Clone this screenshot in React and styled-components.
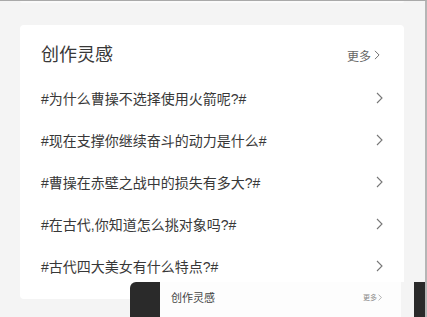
import styled, { createGlobalStyle } from "styled-components";

const GlobalStyle = createGlobalStyle`
  html, body {
    margin: 0;
    padding: 0;
    background: #f4f4f4;
  }
  * {
    box-sizing: border-box;
  }
`;

const Page = styled.div`
  position: relative;
  height: 317px;
  overflow: hidden;
  padding: 0 21px 0 20px;
  border-top: 1px solid #a9a9a9;
  border-right: 2px solid #b5b5b5;
  font-family: "Liberation Sans", "Noto Sans CJK SC", sans-serif;
`;

const PrevCard = styled.div`
  height: 2px;
  background: #fafafa;
  border-radius: 0 0 4px 4px;
`;

const Card = styled.section`
  margin-top: 22px;
  background: #ffffff;
  border-radius: 4px;
  padding: 18px 21px 12px 21px;
`;

const Header = styled.div`
  display: flex;
  align-items: center;
  justify-content: space-between;
  height: 24px;
  margin-bottom: 10px;
`;

const Title = styled.h2`
  margin: 0;
  font-size: 18px;
  font-weight: 400;
  color: #383838;
  line-height: 24px;
`;

const More = styled.a`
  display: flex;
  align-items: center;
  gap: ${p => p.$small ? "1px" : "3px"};
  margin-right: ${p => p.$small ? "0" : "3px"};
  font-size: ${p => p.$small ? "7px" : "12px"};
  color: ${p => p.$small ? "#8a8a8a" : "#666666"};
  cursor: pointer;
`;

const Row = styled.div`
  display: flex;
  align-items: center;
  justify-content: space-between;
  height: 42px;
  font-size: 14px;
  color: #383838;
`;

const Frame = styled.div`
  position: absolute;
  left: 130px;
  top: 281px;
  right: 0;
  bottom: 0;
  display: flex;
  padding: 0 11px 0 30px;
  background: #2a2a2a;
  border-radius: 6px 0 0 0;
`;

const Screen = styled.div`
  flex: 1;
  display: flex;
  background: #f4f4f4;
  padding-right: 13px;
`;

const MiniCard = styled.div`
  flex: 1;
  background: #fdfdfd;
  padding: 0 19px 0 11px;
`;

const MiniHeader = styled.div`
  display: flex;
  align-items: center;
  justify-content: space-between;
  height: 30px;
`;

const MiniTitle = styled.span`
  font-size: 11px;
  color: #444444;
`;

const Chevron = ({ w = 7, h = 12, color = "#777" }) => (
  <svg width={w} height={h} viewBox="0 0 7 12" fill="none">
    <path d="M1 1 L6 6 L1 11" stroke={color} strokeWidth="1.1" />
  </svg>
);

const topics = [
  "#为什么曹操不选择使用火箭呢?#",
  "#现在支撑你继续奋斗的动力是什么#",
  "#曹操在赤壁之战中的损失有多大?#",
  "#在古代,你知道怎么挑对象吗?#",
  "#古代四大美女有什么特点?#",
];

export default function App() {
  return (
    <>
      <GlobalStyle />
      <Page>
        <PrevCard />
        <Card>
          <Header>
            <Title>创作灵感</Title>
            <More>
              更多
              <Chevron w={6} h={10} color="#666" />
            </More>
          </Header>
          {topics.map(t => (
            <Row key={t}>
              <span>{t}</span>
              <Chevron />
            </Row>
          ))}
        </Card>
        <Frame>
          <Screen>
            <MiniCard>
              <MiniHeader>
                <MiniTitle>创作灵感</MiniTitle>
                <More $small>
                  更多
                  <Chevron w={4} h={7} color="#8a8a8a" />
                </More>
              </MiniHeader>
            </MiniCard>
          </Screen>
        </Frame>
      </Page>
    </>
  );
}
